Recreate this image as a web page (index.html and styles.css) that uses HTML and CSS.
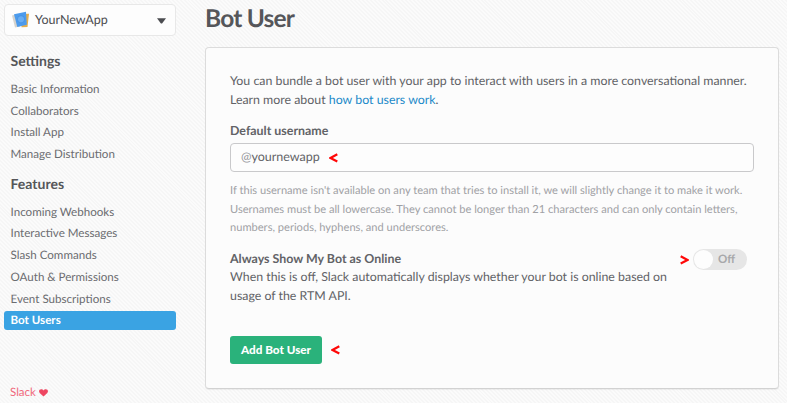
FILE: index.html
```html
<!DOCTYPE html>
<html lang="en">
<head>
<meta charset="utf-8">
<title>Bot User</title>
<link rel="stylesheet" href="styles.css">
</head>
<body>
<div class="page">
  <aside class="sidebar">
    <div class="switcher">
      <svg class="app-icon" width="18" height="18" viewBox="0 0 18 18">
        <path d="M0 4.500l6-1.500 2 12.500-5 1z" fill="#d5d3ce"/>
        <path d="M9 3l8-.3-1.500 13.300-6 .2z" fill="#e5ae4c"/>
        <path d="M2 3.200l12-2.400 .8 13-9.500 2.200z" fill="#4d9bec"/>
        <circle cx="9" cy="8.300" r="3.600" fill="#68adf3" stroke="#3a88dc" stroke-width=".6"/>
      </svg>
      <span class="app-name">YourNewApp</span>
      <svg class="caret" width="9" height="6" viewBox="0 0 8 5"><path d="M0 0h8L4.700 4.400q-.7.8-1.400 0z" fill="#4b4c50"/></svg>
    </div>
    <h2 class="nav-title">Settings</h2>
    <nav class="nav">
      <a>Basic Information</a>
      <a>Collaborators</a>
      <a>Install App</a>
      <a>Manage Distribution</a>
    </nav>
    <h2 class="nav-title features">Features</h2>
    <nav class="nav">
      <a>Incoming Webhooks</a>
      <a>Interactive Messages</a>
      <a>Slash Commands</a>
      <a>OAuth &amp; Permissions</a>
      <a>Event Subscriptions</a>
      <a class="active">Bot Users</a>
    </nav>
    <div class="footer">Slack
      <svg width="9" height="8" viewBox="0 0 9 8"><path d="M4.500 7.600L.7 4C-.7 2.300.3.300 2.200.3c1 0 1.800.5 2.300 1.300C5 .8 5.800.3 6.800.3c1.900 0 2.900 2 1.500 3.700z" fill="#ee4661"/></svg>
    </div>
  </aside>
  <main class="main">
    <h1 class="title">Bot User</h1>
    <section class="card">
      <p class="text">You can bundle a bot user with your app to interact with users in a more conversational manner.<br>Learn more about <a class="link">how bot users work</a>.</p>
      <div class="label">Default username</div>
      <div class="field"><span class="at">@</span><span>yournewapp</span>
        <svg class="mark" width="9" height="10" viewBox="0 0 9 10"><path d="M8.300 1.300L1.500 5l6.800 3.500" /></svg>
      </div>
      <p class="hint">If this username isn't available on any team that tries to install it, we will slightly change it to make it work.<br>Usernames must be all lowercase. They cannot be longer than 21 characters and can only contain letters,<br>numbers, periods, hyphens, and underscores.</p>
      <div class="online">
        <div class="online-text">
          <div class="label">Always Show My Bot as Online</div>
          <p class="text">When this is off, Slack automatically displays whether your bot is online based on<br>usage of the RTM API.</p>
        </div>
        <div class="toggle-row">
          <svg class="mark" width="9" height="10" viewBox="0 0 9 10"><path d="M.7 1.300L7.500 5 .7 8.500"/></svg>
          <div class="toggle"><span class="knob"></span><span class="off">Off</span></div>
        </div>
      </div>
      <div class="actions">
        <button class="button">Add Bot User</button>
        <svg class="mark" width="9" height="10" viewBox="0 0 9 10"><path d="M8.300 1.300L1.500 5l6.800 3.500"/></svg>
      </div>
    </section>
  </main>
</div>
</body>
</html>
```
FILE: styles.css
```css
* { box-sizing: border-box; }
body {
  margin: 0;
  height: 403px;
  overflow: hidden;
  font-family: Lato, sans-serif;
  text-rendering: geometricPrecision;
  color: #626367;
  background: repeating-linear-gradient(45deg, #f6f6f6 0 1.4px, #fbfbfb 1.4px 2.8px);
}
h1, h2, p { margin: 0; }
svg { display: block; flex: none; }
.page { display: flex; height: 403px; padding: 4px 8px 0 4px; gap: 29px; }
.sidebar { width: 172px; flex: none; display: flex; flex-direction: column; }
.switcher {
  height: 32px;
  display: flex;
  align-items: center;
  padding: 0 9px 0 7px;
  background: #fdfdfd;
  border: 1px solid #e8e8e8;
  border-radius: 4px;
}
.app-name { margin-left: 5px; font-size: 12.500px; line-height: 18px; color: #4b4c50; }
.caret { margin: 1px 0 0 auto; }
.nav-title { font-size: 14px; line-height: 18px; font-weight: 700; margin: 16px 0 9px 6.500px; color: #555659; }
.nav-title.features { margin: 9px 0 9px 6.500px; }
.nav a {
  display: block;
  height: 21.700px;
  padding-left: 6.500px;
  font-size: 11.600px;
  line-height: 21.700px;
  white-space: nowrap;
  color: #6b6c70;
}
.nav .active {
  height: 19px;
  line-height: 19px;
  margin-top: 1px;
  color: #fff;
  font-weight: 700;
  background: #3aa3e3;
  border-radius: 3px;
}
.footer { display: flex; align-items: center; gap: 3px; margin: auto 0 2px 6px; font-size: 11.500px; line-height: 16px; color: #f0697c; }
.main { flex: 1; }
.title { font-size: 24.500px; line-height: 30px; font-weight: 700; letter-spacing: -.8px; margin-bottom: 13px; color: #55565a; }
.card {
  margin-right: -1px;
  width: 574px;
  height: 342px;
  padding: 24px 24px 0;
  border: 1px solid #dcdcdc;
  border-bottom-color: #d2d2d2;
  border-radius: 4px;
  background: #fcfcfc;
  box-shadow: 0 1px 1px rgba(0,0,0,.06);
}
.text { font-size: 12.370px; line-height: 18.600px; white-space: nowrap; }
.link { color: #1c8ac9; }
.label { font-size: 12.420px; line-height: 18px; font-weight: 700; }
.text + .label { margin-top: 13px; }
.field {
  display: flex;
  align-items: center;
  height: 29px;
  width: 524px;
  margin-top: 3px;
  padding: 0 10px 3px;
  border: 1px solid #c9c9cb;
  border-radius: 4px;
  background: #fdfdfd;
  font-size: 12.500px;
}
.at { color: #94959a; }
.field .mark { margin: 3px 0 0 9px; }
.mark { fill: none; stroke: #ff0808; stroke-width: 2.2; }
.hint { margin-top: 10px; font-size: 11.120px; line-height: 18.600px; color: #a0a1a5; white-space: nowrap; }
.online { display: flex; margin-top: 12px; width: 517px; justify-content: space-between; }
.online-text { width: 440px; }
.toggle-row { display: flex; align-items: center; gap: 4px; height: 20px; }
.toggle { display: flex; align-items: center; width: 54px; height: 21px; padding: 1px; border-radius: 11px; background: #e6e6e6; }
.knob { width: 19px; height: 19px; border-radius: 50%; background: #fdfdfd; }
.off { margin-left: 5px; font-size: 11.500px; line-height: 16px; font-weight: 700; color: #a7a8aa; }
.actions { display: flex; align-items: center; gap: 9px; margin-top: 31px; }
.button {
  width: 92px;
  height: 28px;
  padding: 0 0 3px;
  border: 0;
  border-radius: 3px;
  background: #2ab27b;
  color: #fff;
  font: 900 11.700px/18px Lato, sans-serif;
}
```
